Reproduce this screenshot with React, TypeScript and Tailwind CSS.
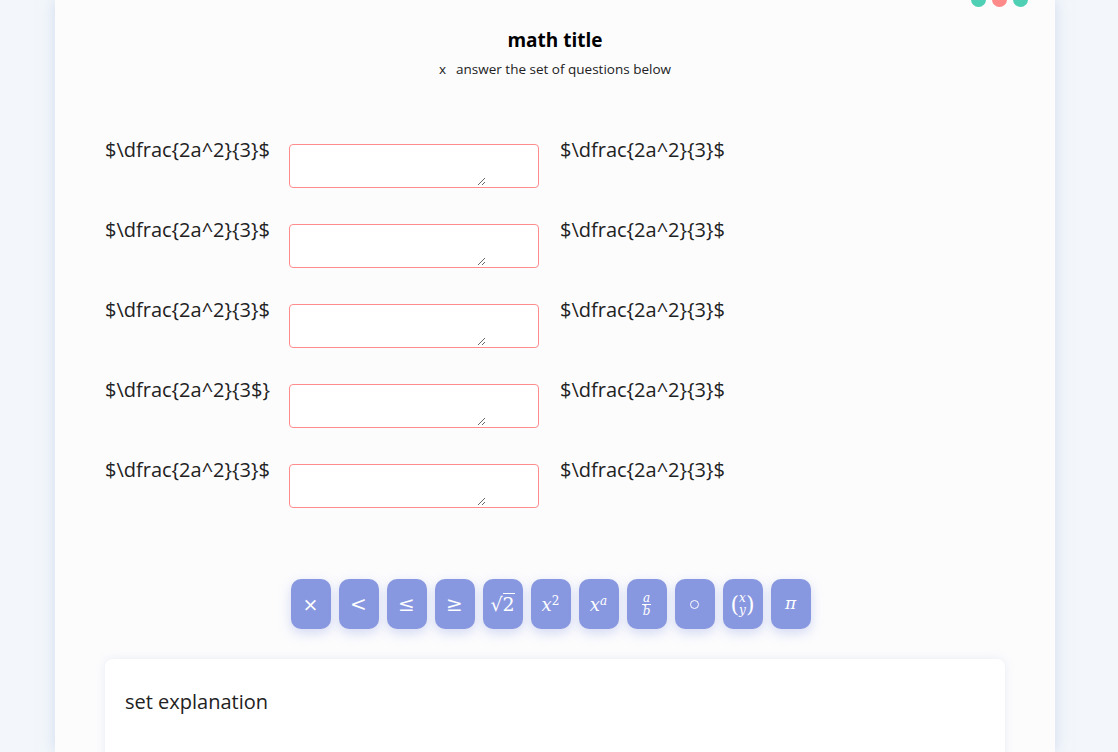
import React from "react";

const rows = [
  { left: "$\\dfrac{2a^2}{3}$", right: "$\\dfrac{2a^2}{3}$" },
  { left: "$\\dfrac{2a^2}{3}$", right: "$\\dfrac{2a^2}{3}$" },
  { left: "$\\dfrac{2a^2}{3}$", right: "$\\dfrac{2a^2}{3}$" },
  { left: "$\\dfrac{2a^2}{3$}", right: "$\\dfrac{2a^2}{3}$" },
  { left: "$\\dfrac{2a^2}{3}$", right: "$\\dfrac{2a^2}{3}$" },
];

const serif = { fontFamily: '"DejaVu Serif", "Liberation Serif", serif' };

function Key({ children }: { children: React.ReactNode }) {
  return (
    <button
      className="w-10 h-[50px] rounded-[10px] bg-[#8898e0] text-white flex items-center justify-center shadow-[0_4px_12px_rgba(136,152,224,0.35)]"
      style={serif}
    >
      {children}
    </button>
  );
}

export default function App() {
  return (
    <div
      className="min-h-screen bg-[#f3f7fb] overflow-hidden"
      style={{ fontFamily: '"Open Sans", Lato, sans-serif' }}
    >
      <div className="relative ml-[55px] w-[1000px] h-[752px] bg-[#fcfcfd] shadow-[0_0_14px_rgba(180,195,225,0.55)] px-[50px]">
        {/* ── traffic dots ─────────────────────── */}
        <div className="absolute -top-[8px] right-[27px] flex gap-[6px]">
          <span className="w-[15px] h-[15px] rounded-full bg-[#4fcfb3]" />
          <span className="w-[15px] h-[15px] rounded-full bg-[#ff8a8a]" />
          <span className="w-[15px] h-[15px] rounded-full bg-[#4fcfb3]" />
        </div>

        {/* ── heading ─────────────────────────── */}
        <div className="pt-[28px] text-center">
          <p className="text-[19px] font-bold text-black leading-[24px]">math title</p>
          <p className="text-[13.5px] text-[#222] mt-[9px] leading-[17px]">
            <span className="mr-[10px]">x</span>answer the set of questions below
          </p>
        </div>

        {/* ── questions ───────────────────────── */}
        <div className="mt-[66px] flex flex-col gap-[36px]">
          {rows.map((r, i) => (
            <div key={i} className="flex items-start">
              <p className="w-[184px] text-[20px] text-[#222] leading-[24px] mt-[-6px]">{r.left}</p>
              <div className="w-[250px] h-[44px] border border-[#ff8c8c] rounded-[4px] bg-white">
                <textarea className="block w-[196px] h-[41px] bg-transparent outline-none" />
              </div>
              <p className="ml-[21px] text-[20px] text-[#222] leading-[24px] mt-[-6px]">{r.right}</p>
            </div>
          ))}
        </div>

        {/* ── keypad ──────────────────────────── */}
        <div className="mt-[71px] flex justify-center gap-2 pr-[9px]">
          <Key><span className="text-[19px]">×</span></Key>
          <Key><span className="text-[20px]">&lt;</span></Key>
          <Key><span className="text-[20px]">≤</span></Key>
          <Key><span className="text-[20px]">≥</span></Key>
          <Key>
            <span className="flex items-start text-[19px]">
              <span>√</span>
              <span className="border-t border-white leading-[20px] mt-[3px]">2</span>
            </span>
          </Key>
          <Key>
            <span className="italic text-[18px]">x<sup className="not-italic text-[12px]">2</sup></span>
          </Key>
          <Key>
            <span className="italic text-[18px]">x<sup className="text-[12px]">a</sup></span>
          </Key>
          <Key>
            <span className="flex flex-col items-center italic text-[12px] leading-[12px]">
              <span className="border-b border-white px-[1px]">a</span>
              <span>b</span>
            </span>
          </Key>
          <Key><span className="w-[9px] h-[9px] rounded-full border border-white" /></Key>
          <Key>
            <span className="flex items-center">
              <span className="text-[22px] font-light">(</span>
              <span className="flex flex-col items-center italic text-[12px] leading-[12px]">
                <span>x</span>
                <span>y</span>
              </span>
              <span className="text-[22px] font-light">)</span>
            </span>
          </Key>
          <Key><span className="italic text-[17px]">π</span></Key>
        </div>

        {/* ── explanation ─────────────────────── */}
        <div className="mt-[30px] bg-white rounded-[8px] shadow-[0_0_10px_rgba(200,210,230,0.35)] px-5 pt-[28px] h-[120px]">
          <p className="text-[20px] text-[#222]">set explanation</p>
        </div>
      </div>
    </div>
  );
}
